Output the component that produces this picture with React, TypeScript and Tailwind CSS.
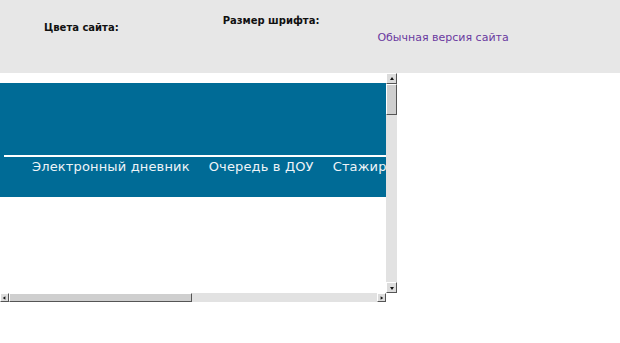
import React from "react";

const font = { fontFamily: '"DejaVu Sans", "Noto Sans", sans-serif' };

function ArrowBtn({ dir, className }: { dir: "up" | "down" | "left" | "right"; className?: string }) {
  const pts: Record<string, string> = {
    up: "2,5 4,2 6,5",
    down: "2,3 4,6 6,3",
    left: "5,2 2,4 5,6",
    right: "3,2 6,4 3,6",
  };
  return (
    <div
      className={
        "flex items-center justify-center bg-[#dcdcdc] border-t border-l border-t-white border-l-white border-b border-r border-b-[#555] border-r-[#555] " +
        (className || "")
      }
    >
      <svg width="8" height="8" viewBox="0 0 8 8">
        <polygon points={pts[dir]} fill="#111" />
      </svg>
    </div>
  );
}

export default function App() {
  return (
    <div className="w-[620px] h-[343px] bg-white overflow-hidden" style={font}>
      <div className="h-[73px] bg-[#e7e7e7] flex items-start">
        <div className="ml-[44px] mt-[21px] text-[10px] font-bold text-[#111] leading-[13px]">Цвета сайта:</div>
        <div className="ml-[104px] mt-[14px] text-[10px] font-bold text-[#111] leading-[13px]">Размер шрифта:</div>
        <div className="ml-[58px] mt-[31px] text-[11px] text-[#6a3aa0] leading-[14px]">Обычная версия сайта</div>
      </div>
      <div className="w-[397px] h-[229px] flex flex-col">
        <div className="flex h-[220px]">
          <div className="w-[386px] h-[220px] bg-white pt-[10px] overflow-hidden">
            <div className="h-[114px] bg-[#006b96] pt-[72px] overflow-hidden">
              <div className="ml-[4px] h-[2px] bg-white" />
              <div className="flex gap-[19px] pl-[32px] pt-[1px] text-[13px] leading-[18px] text-[#eef4f8] whitespace-nowrap tracking-[0.15px]">
                <span className="shrink-0">Электронный дневник</span>
                <span className="shrink-0">Очередь в ДОУ</span>
                <span className="shrink-0">Стажировка</span>
              </div>
            </div>
          </div>
          <div className="w-[11px] h-[220px] bg-[#e2e2e2] flex flex-col">
            <ArrowBtn dir="up" className="h-[11px] w-[11px]" />
            <div className="h-[31px] w-[11px] bg-[#cfcfcf] border-t border-l border-t-white border-l-white border-b border-r border-b-[#555] border-r-[#555]" />
            <div className="flex-1" />
            <ArrowBtn dir="down" className="h-[11px] w-[11px]" />
          </div>
        </div>
        <div className="flex h-[9px] w-[386px] bg-[#e2e2e2]">
          <ArrowBtn dir="left" className="h-[9px] w-[9px]" />
          <div className="w-[183px] h-[9px] bg-[#cfcfcf] border-t border-l border-t-white border-l-white border-b border-r border-b-[#555] border-r-[#555]" />
          <div className="flex-1" />
          <ArrowBtn dir="right" className="h-[9px] w-[9px]" />
        </div>
      </div>
    </div>
  );
}
